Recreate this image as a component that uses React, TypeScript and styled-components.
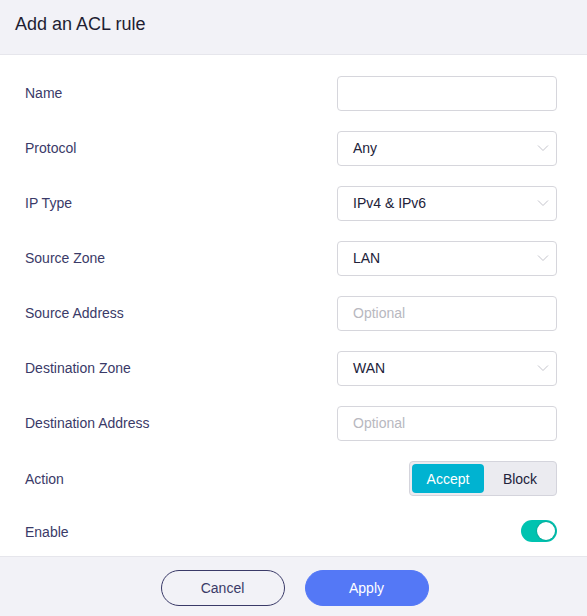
import React, { useState } from "react";
import styled, { createGlobalStyle } from "styled-components";

const Global = createGlobalStyle`
  html, body { margin: 0; padding: 0; background: #fff; }
  body { font-family: "Liberation Sans", Arial, sans-serif; }
  * { box-sizing: border-box; }
`;

const Dialog = styled.div`
  width: 587px;
  height: 616px;
  display: flex;
  flex-direction: column;
  background: #fff;
`;

const Header = styled.div`
  height: 55px;
  flex: none;
  background: #f2f2f7;
  border-bottom: 1px solid #e6e6ec;
  display: flex;
  align-items: center;
  padding: 0 0 6px 15px;
`;

const Title = styled.h1`
  margin: 0;
  font-size: 18px;
  font-weight: 400;
  color: #1e1e32;
`;

const Body = styled.div`
  flex: 1;
  display: flex;
  flex-direction: column;
  gap: 20px;
  padding: 21px 30px 0 25px;
`;

const Row = styled.div`
  height: 35px;
  display: flex;
  align-items: center;
  justify-content: space-between;
`;

const Label = styled.span<{ $shift?: number }>`
  font-size: 14px;
  color: #3a3a68;
  position: relative;
  top: ${(p) => p.$shift ?? -1}px;
`;

const Field = styled.div<{ $placeholder?: boolean }>`
  width: 220px;
  height: 35px;
  border: 1px solid #d6d6dc;
  border-radius: 4px;
  display: flex;
  align-items: center;
  justify-content: space-between;
  padding: 0 7px 1px 15px;
  font-size: 14px;
  color: ${(p) => (p.$placeholder ? "#b8b8c0" : "#22223a")};
`;

const Chevron = styled.svg`
  width: 12px;
  height: 8px;
`;

const Segmented = styled.div`
  width: 148px;
  height: 35px;
  border: 1px solid #d4d4dc;
  border-radius: 4px;
  background: #ebebf0;
  padding: 2px;
  display: flex;
`;

const Segment = styled.button<{ $active?: boolean }>`
  flex: none;
  width: 72px;
  border: none;
  border-radius: 4px;
  font-family: inherit;
  font-size: 14px;
  padding: 0;
  background: ${(p) => (p.$active ? "#00b3d1" : "transparent")};
  color: ${(p) => (p.$active ? "#fff" : "#22223a")};
`;

const Switch = styled.div<{ $on: boolean }>`
  width: 36px;
  height: 22px;
  border-radius: 11px;
  background: ${(p) => (p.$on ? "#00c3b0" : "#ccc")};
  display: flex;
  align-items: center;
  justify-content: ${(p) => (p.$on ? "flex-end" : "flex-start")};
  padding: 2px;
  margin-top: -6px;
`;

const Knob = styled.div`
  width: 18px;
  height: 18px;
  border-radius: 50%;
  background: #fff;
  box-shadow: 0 0 2px rgba(0, 0, 0, 0.35);
`;

const Footer = styled.div`
  height: 60px;
  flex: none;
  background: #f2f2f7;
  border-top: 1px solid #e6e6ec;
  display: flex;
  justify-content: center;
  align-items: center;
  gap: 20px;
  padding: 2px 0 0 2px;
`;

const Button = styled.button<{ $primary?: boolean }>`
  width: 124px;
  height: 36px;
  border-radius: 18px;
  font-family: inherit;
  font-size: 14px;
  padding: 0;
  border: 1px solid ${(p) => (p.$primary ? "#5478f6" : "#3a3a68")};
  background: ${(p) => (p.$primary ? "#5478f6" : "transparent")};
  color: ${(p) => (p.$primary ? "#fff" : "#3a3a68")};
`;

const ChevronIcon = () => (
  <Chevron viewBox="0 0 12 8">
    <path d="M1 1.5 L6 6.5 L11 1.5" fill="none" stroke="#c4c4cc" strokeWidth="1" />
  </Chevron>
);

type FieldRow = { label: string; value?: string; placeholder?: string; select?: boolean };

const rows: FieldRow[] = [
  { label: "Name", value: "" },
  { label: "Protocol", value: "Any", select: true },
  { label: "IP Type", value: "IPv4 & IPv6", select: true },
  { label: "Source Zone", value: "LAN", select: true },
  { label: "Source Address", placeholder: "Optional" },
  { label: "Destination Zone", value: "WAN", select: true },
  { label: "Destination Address", placeholder: "Optional" },
];

export default function App() {
  const [action, setAction] = useState("Accept");
  const [enabled, setEnabled] = useState(true);
  return (
    <Dialog>
      <Global />
      <Header>
        <Title>Add an ACL rule</Title>
      </Header>
      <Body>
        {rows.map((r) => (
          <Row key={r.label}>
            <Label>{r.label}</Label>
            <Field $placeholder={!r.value}>
              <span>{r.value || r.placeholder || ""}</span>
              {r.select && <ChevronIcon />}
            </Field>
          </Row>
        ))}
        <Row>
          <Label $shift={0}>Action</Label>
          <Segmented>
            {["Accept", "Block"].map((a) => (
              <Segment key={a} $active={action === a} onClick={() => setAction(a)}>
                {a}
              </Segment>
            ))}
          </Segmented>
        </Row>
        <Row>
          <Label $shift={-2}>Enable</Label>
          <Switch $on={enabled} onClick={() => setEnabled(!enabled)}>
            <Knob />
          </Switch>
        </Row>
      </Body>
      <Footer>
        <Button>Cancel</Button>
        <Button $primary>Apply</Button>
      </Footer>
    </Dialog>
  );
}
